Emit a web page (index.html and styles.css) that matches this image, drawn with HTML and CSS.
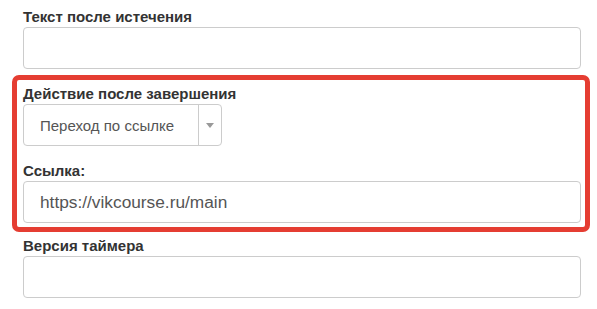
FILE: index.html
```html
<!DOCTYPE html>
<html>
<head>
<meta charset="utf-8">
<link rel="stylesheet" href="styles.css">
</head>
<body>
<div class="page">
  <div class="group">
    <label class="label">Текст после истечения</label>
    <div class="input"></div>
  </div>
  <div class="highlight">
    <div class="group">
      <label class="label">Действие после завершения</label>
      <div class="select">
        <span class="select-text">Переход по ссылке</span>
        <span class="select-arrow"><span class="tri"></span></span>
      </div>
    </div>
    <div class="group group-gap">
      <label class="label">Ссылка:</label>
      <div class="input"><span class="input-text">https://vikcourse.ru/main</span></div>
    </div>
  </div>
  <div class="group group-last">
    <label class="label">Версия таймера</label>
    <div class="input"></div>
  </div>
</div>
</body>
</html>
```
FILE: styles.css
```css
html, body {
  margin: 0;
  padding: 0;
  background: #ffffff;
}
body {
  font-family: "Liberation Sans", Arial, sans-serif;
  color: #333333;
}
.page {
  padding: 7px 16px 0 12px;
}
.page > .group {
  padding-left: 11px;
}
.label {
  display: block;
  font-size: 15px;
  font-weight: bold;
  line-height: 20px;
  color: #333333;
}
.input {
  box-sizing: border-box;
  height: 42px;
  border: 1px solid #cccccc;
  border-radius: 4px;
  background: #fff;
  display: flex;
  align-items: center;
  padding-left: 16px;
}
.input-text {
  font-size: 17.3px;
  color: #555555;
}
.highlight {
  margin-top: 6px;
  border: 5px solid #e53d32;
  border-radius: 7px;
  padding: 4px 4px 4px 6px;
  margin-right: -9px;
}
.group-gap {
  margin-top: 15px;
}
.group-last {
  margin-top: 4px;
}
.select {
  box-sizing: border-box;
  width: 199px;
  height: 42px;
  border: 1px solid #cccccc;
  border-radius: 4px;
  display: flex;
  align-items: stretch;
}
.select-text {
  flex: 1;
  display: flex;
  align-items: center;
  padding-left: 16px;
  font-size: 15px;
  color: #555555;
}
.select-arrow {
  width: 22px;
  border-left: 1px solid #cccccc;
  display: flex;
  align-items: center;
  justify-content: center;
}
.tri {
  width: 0;
  height: 0;
  border-left: 4px solid transparent;
  border-right: 4px solid transparent;
  border-top: 5px solid #999999;
}
```
